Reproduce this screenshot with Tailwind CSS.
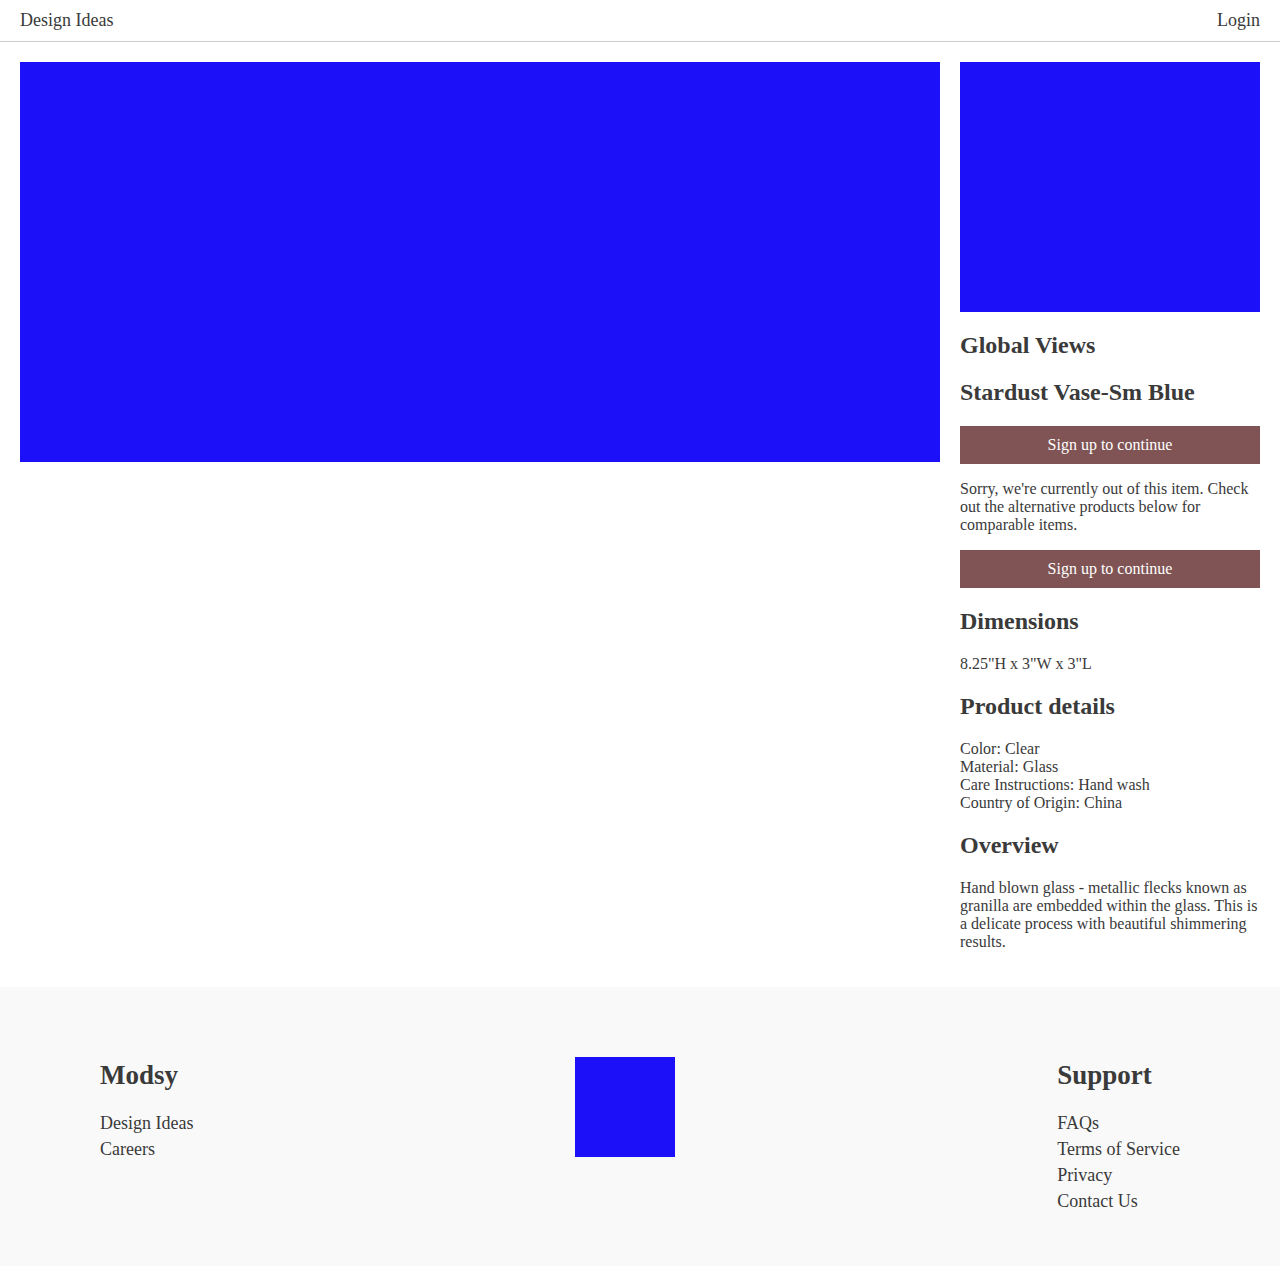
<!DOCTYPE html>
<html lang="en">
<head>
<meta charset="utf-8">
<meta name="viewport" content="width=device-width, initial-scale=1">
<title>Stardust Vase-Sm Blue</title>
<script src="https://cdn.jsdelivr.net/npm/@tailwindcss/browser@4"></script>
</head>
<body class="bg-white font-['Liberation_Serif',serif] text-base leading-[18px] text-[#3a3a3a]">
<header class="border-b border-[#cccccc] px-5 py-2.5">
  <nav class="flex justify-between text-lg leading-[21px]">
    <a href="#">Design Ideas</a>
    <a href="#">Login</a>
  </nav>
</header>
<main class="flex gap-5 p-5">
  <div class="h-[400px] flex-1 bg-[#1b10f7]" role="img" aria-label="Room design"></div>
  <section class="w-[300px] shrink-0">
    <div class="mb-5 h-[250px] bg-[#1b10f7]" role="img" aria-label="Stardust Vase"></div>
    <h2 class="mb-5 text-2xl leading-[27px] font-bold">Global Views</h2>
    <h2 class="mb-5 text-2xl leading-[27px] font-bold">Stardust Vase-Sm Blue</h2>
    <button type="button" class="mb-4 block w-full bg-[#805454] py-2.5 text-white">Sign up to continue</button>
    <p class="mb-4">Sorry, we're currently out of this item. Check out the alternative products below for comparable items.</p>
    <button type="button" class="mb-5 block w-full bg-[#805454] py-2.5 text-white">Sign up to continue</button>
    <h2 class="mb-5 text-2xl leading-[27px] font-bold">Dimensions</h2>
    <p class="mb-5">8.25"H x 3"W x 3"L</p>
    <h2 class="mb-5 text-2xl leading-[27px] font-bold">Product details</h2>
    <ul class="mb-5">
      <li>Color: Clear</li>
      <li>Material: Glass</li>
      <li>Care Instructions: Hand wash</li>
      <li>Country of Origin: China</li>
    </ul>
    <h2 class="mb-5 text-2xl leading-[27px] font-bold">Overview</h2>
    <p class="mb-4">Hand blown glass - metallic flecks known as granilla are embedded within the glass. This is a delicate process with beautiful shimmering results.</p>
  </section>
</main>
<footer class="flex justify-between bg-[#f9f9f9] px-[100px] pt-[70px] pb-[50px] text-lg leading-[21px]">
  <nav aria-labelledby="modsy">
    <h2 id="modsy" class="mb-5 text-[27px] leading-9 font-bold">Modsy</h2>
    <ul>
      <li class="mb-[5px]"><a href="#">Design Ideas</a></li>
      <li class="mb-[5px]"><a href="#">Careers</a></li>
    </ul>
  </nav>
  <div class="size-[100px] bg-[#1b10f7]" role="img" aria-label="Modsy logo"></div>
  <nav aria-labelledby="support">
    <h2 id="support" class="mb-5 text-[27px] leading-9 font-bold">Support</h2>
    <ul>
      <li class="mb-[5px]"><a href="#">FAQs</a></li>
      <li class="mb-[5px]"><a href="#">Terms of Service</a></li>
      <li class="mb-[5px]"><a href="#">Privacy</a></li>
      <li class="mb-[5px]"><a href="#">Contact Us</a></li>
    </ul>
  </nav>
</footer>
</body>
</html>
